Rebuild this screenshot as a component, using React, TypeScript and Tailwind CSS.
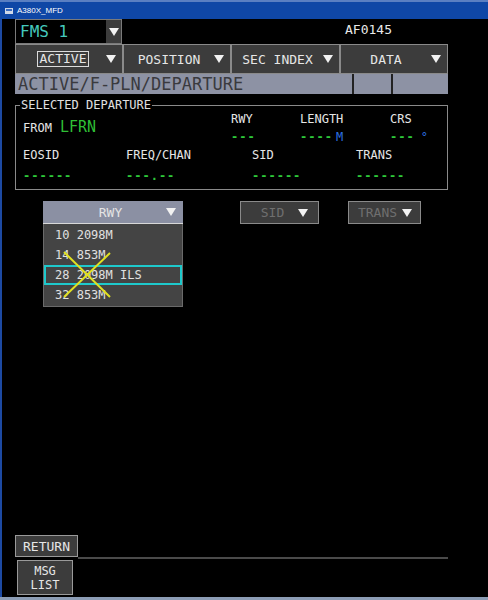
import React from 'react';

const Arrow: React.FC<{ className?: string }> = ({ className = '' }) => (
  <svg width="10" height="10" viewBox="0 0 10 10" className={className}>
    <path d="M0 1 H10 L5 9 Z" fill="#f2f2f2" />
  </svg>
);

const Dashes: React.FC<{ text: string }> = ({ text }) => (
  <span className="text-[#2ec83a] font-bold tracking-[1px]">{text}</span>
);

const tabs = [
  { label: 'POSITION', w: 'w-[108px]' },
  { label: 'SEC INDEX', w: 'w-[109px]' },
  { label: 'DATA', w: 'w-[108px]' },
];

const runways = ['10 2098M', '14 853M', '28 2098M ILS', '32 853M'];

export default function App() {
  return (
    <div className="w-[488px] h-[600px] bg-black flex flex-col overflow-hidden font-['DejaVu_Sans_Mono',monospace] text-[#e6e6e6]">
      {/* Window title bar */}
      <div className="h-[19px] shrink-0 bg-[#0f47a6] border-t-2 border-[#5a7fc2] flex items-center gap-[4px] pl-[5px]">
        <svg width="8" height="6" viewBox="0 0 8 6">
          <rect x="0" y="0" width="8" height="6" fill="#cfd8e8" />
          <rect x="1" y="1" width="6" height="2" fill="#3a6bc0" />
        </svg>
        <span className="font-['Liberation_Sans',sans-serif] text-[8px] text-white leading-none">A380X_MFD</span>
      </div>

      {/* MFD body */}
      <div className="flex-1 flex flex-col border-l-2 border-[#1d4aa3] pl-[13px]">
        {/* FMS selector row */}
        <div className="flex items-start h-[25px] shrink-0">
          <div className="flex w-[107px] h-[25px] border border-[#7a7a7a]">
            <div className="flex-1 flex items-center pl-[4px] text-[16px] leading-none text-[#45c9bd]">FMS 1</div>
            <div className="w-[15px] bg-[#3c3c3c] flex items-center justify-center">
              <Arrow />
            </div>
          </div>
          <div className="ml-[223px] mt-[3px] text-[13px] leading-[16px] text-[#e8e8e8]">AF0145</div>
        </div>

        {/* Tabs */}
        <div className="flex h-[30px] shrink-0">
          <div className="w-[108px] flex items-center bg-[#3c3c3c] border border-[#8a8a8a]">
            <div className="flex-1 flex justify-center pl-[4px]">
              <span className="border border-[#dcdcdc] px-[2px] text-[13px] leading-[14px]">ACTIVE</span>
            </div>
            <Arrow className="mr-[6px]" />
          </div>
          {tabs.map((t) => (
            <div key={t.label} className={`${t.w} flex items-center bg-[#3c3c3c] border border-[#8a8a8a]`}>
              <div className="flex-1 text-center text-[13px] leading-none">{t.label}</div>
              <Arrow className="mr-[6px]" />
            </div>
          ))}
        </div>

        {/* Breadcrumb */}
        <div className="flex w-[433px] h-[20px] shrink-0 bg-[#8d92a4]">
          <div className="flex-1 pl-[3px] text-[17px] leading-[20px] text-[#3a3a3e]">ACTIVE/F-PLN/DEPARTURE</div>
          <div className="w-[41px] border-x-2 border-[#222]" />
          <div className="w-[55px]" />
        </div>

        {/* Selected departure */}
        <fieldset className="mt-[4px] w-[433px] h-[92px] shrink-0 border border-[#8a8a8a] px-[7px]">
          <legend className="-ml-[3px] px-[1px] text-[12px] leading-[14px] text-[#e0e0e0]">SELECTED DEPARTURE</legend>
          <div className="flex items-start text-[12px] leading-[14px]">
            <div className="w-[208px] pt-[8px] flex items-baseline">
              <span>FROM</span>
              <span className="ml-[8px] text-[15px] text-[#2fbf35]">LFRN</span>
            </div>
            <div className="w-[69px] flex flex-col gap-[4px]">
              <span>RWY</span>
              <Dashes text="---" />
            </div>
            <div className="w-[90px] flex flex-col gap-[4px]">
              <span>LENGTH</span>
              <span>
                <Dashes text="----" />
                <span className="ml-[3px] text-[#2c6fe0]">M</span>
              </span>
            </div>
            <div className="flex flex-col gap-[4px]">
              <span>CRS</span>
              <span>
                <Dashes text="---" />
                <span className="ml-[6px] text-[#2c6fe0]">°</span>
              </span>
            </div>
          </div>
          <div className="flex items-start mt-[4px] text-[12px] leading-[14px]">
            <div className="w-[103px] flex flex-col gap-[7px]">
              <span>EOSID</span>
              <Dashes text="------" />
            </div>
            <div className="w-[126px] flex flex-col gap-[7px]">
              <span>FREQ/CHAN</span>
              <Dashes text="---.--" />
            </div>
            <div className="w-[104px] flex flex-col gap-[7px]">
              <span>SID</span>
              <Dashes text="------" />
            </div>
            <div className="flex flex-col gap-[7px]">
              <span>TRANS</span>
              <Dashes text="------" />
            </div>
          </div>
        </fieldset>

        {/* Dropdowns */}
        <div className="flex items-start mt-[11px] shrink-0">
          <div className="ml-[28px] w-[140px] flex flex-col">
            <div className="h-[23px] flex items-center bg-[#8b90a3] border-b border-[#d8d8d8]">
              <div className="flex-1 text-center text-[13px] leading-none text-[#e4e4e4] pl-[12px]">RWY</div>
              <Arrow className="mr-[7px]" />
            </div>
            <div className="relative bg-[#444444] border-x border-b border-[#6a6a6a] pt-[1px] pb-[1px]">
              {runways.map((r, i) => (
                <div
                  key={r}
                  className={
                    i === 2
                      ? 'h-[20px] flex items-center pl-[9px] border-2 border-[#1ec9cc] text-[12px] text-[#e0e0e0]'
                      : 'h-[20px] flex items-center pl-[11px] text-[12px] text-[#e0e0e0]'
                  }
                >
                  {r}
                </div>
              ))}
              <svg className="absolute left-0 top-0 pointer-events-none" width="140" height="82" viewBox="0 0 140 82">
                <path d="M20 28 L66 73 M66 29 L20 73" stroke="#e0e020" strokeWidth="2" fill="none" />
              </svg>
            </div>
          </div>
          <div className="ml-[57px] w-[79px] h-[23px] flex items-center bg-[#3c3c3c] border border-[#8a8a8a]">
            <div className="flex-1 text-center text-[13px] leading-none text-[#6f6f6f] pl-[6px]">SID</div>
            <Arrow className="mr-[10px]" />
          </div>
          <div className="ml-[29px] w-[73px] h-[23px] flex items-center bg-[#3c3c3c] border border-[#8a8a8a]">
            <div className="flex-1 text-center text-[13px] leading-none text-[#6f6f6f] pl-[4px]">TRANS</div>
            <Arrow className="mr-[8px]" />
          </div>
        </div>

        {/* Bottom buttons */}
        <div className="mt-auto flex items-end">
          <div className="w-[63px] h-[22px] mb-[2px] flex items-center justify-center bg-[#3c3c3c] border border-[#9a9a9a] text-[13px] leading-none">
            RETURN
          </div>
          <div className="w-[370px] h-[2px] bg-[#4a4a4a]" />
        </div>
        <div className="ml-[2px] mt-[1px] mb-[2px] w-[56px] h-[35px] flex flex-col items-center justify-center bg-[#3c3c3c] border border-[#9a9a9a] text-[12px] leading-[14px]">
          <span>MSG</span>
          <span>LIST</span>
        </div>
      </div>
      <div className="h-[3px] shrink-0 bg-[#8c9db5]" />
    </div>
  );
}
